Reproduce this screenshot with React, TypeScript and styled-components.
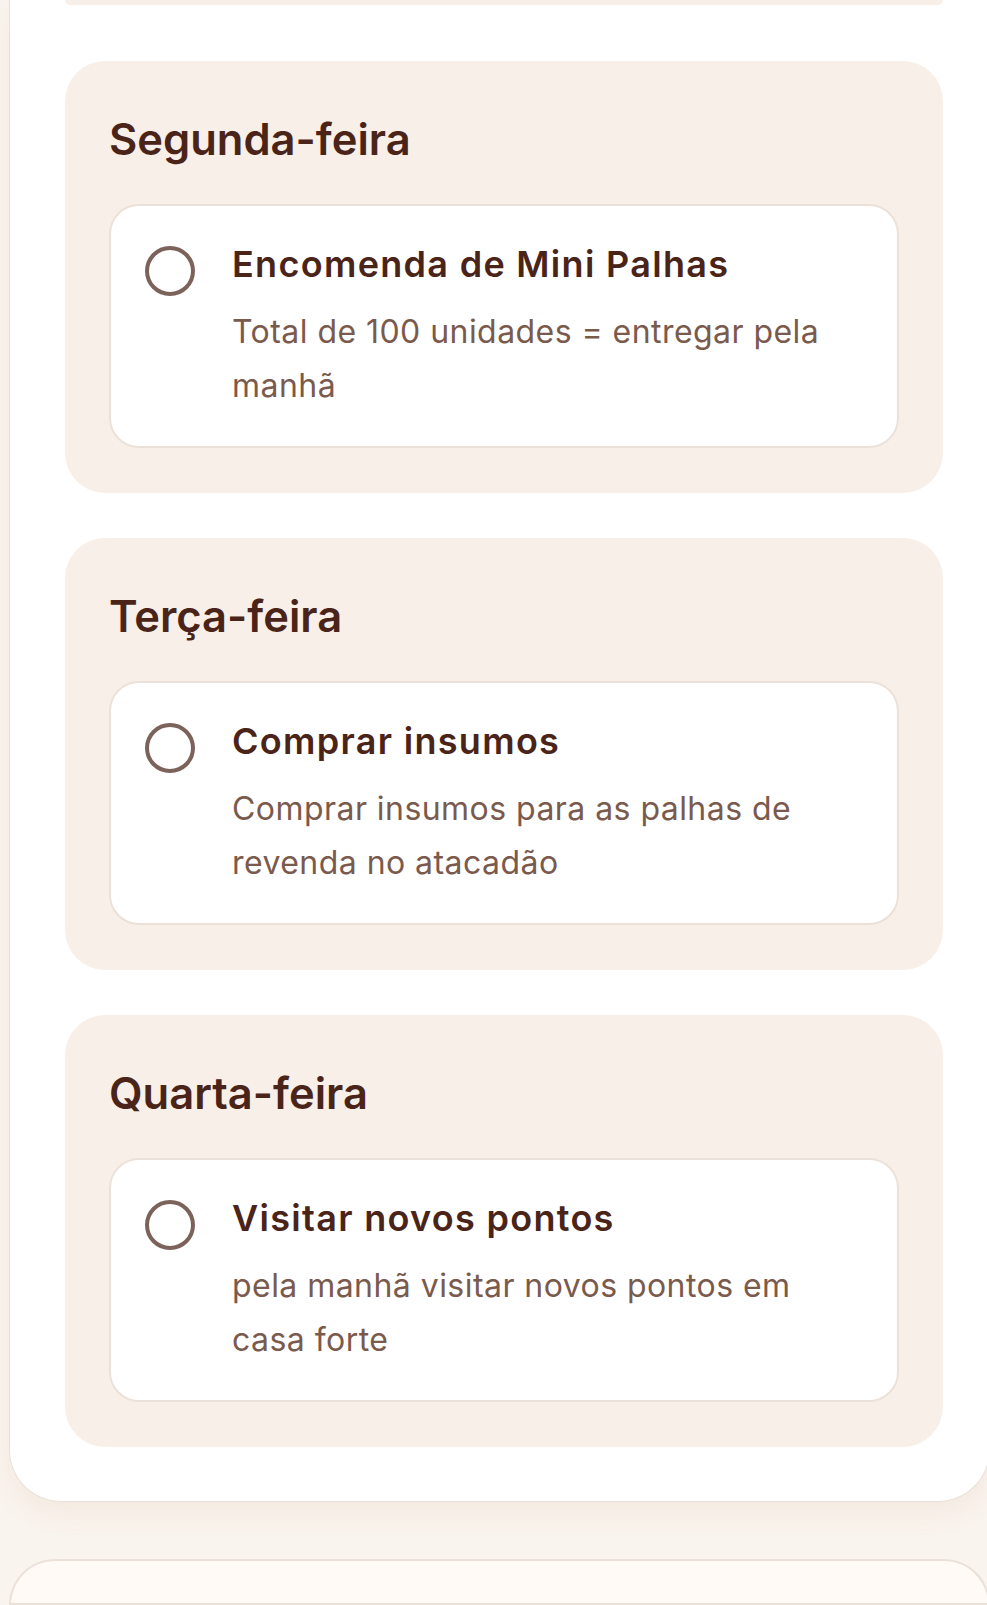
import React from 'react';
import styled, { createGlobalStyle } from 'styled-components';

const GlobalStyle = createGlobalStyle`
  html, body {
    margin: 0;
    padding: 0;
    background: #faf4ee;
    font-family: Inter, "Noto Sans", sans-serif;
    color: #4a2419;
    overflow: hidden;
  }
  * { box-sizing: border-box; }
`;

const Page = styled.div`
  display: flex;
  flex-direction: column;
  gap: 57px;
  height: 1605px;
  overflow: hidden;
`;

const WeekCard = styled.section`
  margin: 0 -3px 0 9px;
  padding: 0 46px 54px 55px;
  background: #ffffff;
  border: 1px solid #eae0d7;
  border-top: none;
  border-radius: 0 0 52px 52px;
  box-shadow: 0 12px 28px rgba(150, 100, 60, 0.07);
  display: flex;
  flex-direction: column;
  gap: 45px;
`;

const PrevBlock = styled.div`
  height: 5px;
  margin-bottom: 11px;
  background: #f8f0e8;
  border-radius: 0 0 8px 8px;
`;

const DayBlock = styled.div`
  background: #f8f0e8;
  border-radius: 40px;
  padding: 45px 44px 45px 44px;
`;

const DayTitle = styled.h2`
  margin: 0 0 32px;
  font-size: 43.5px;
  line-height: 66px;
  font-weight: 600;
  color: #4a2419;
`;

const TaskCard = styled.div`
  display: flex;
  align-items: flex-start;
  gap: 37px;
  background: #ffffff;
  border: 2px solid #ebe1d9;
  border-radius: 30px;
  padding: 37px 36px 33px 34px;
`;

const CheckCircle = styled.span`
  flex: none;
  width: 50px;
  height: 50px;
  margin-top: 3px;
  border-radius: 50%;
  border: 4px solid #7b625a;
`;

const TaskBody = styled.div`
  display: flex;
  flex-direction: column;
  gap: 19px;
`;

const TaskTitle = styled.div`
  font-size: 36px;
  line-height: 43px;
  font-weight: 600;
  letter-spacing: 1.3px;
  color: #4a2419;
`;

const TaskDesc = styled.div`
  font-size: 32px;
  line-height: 54px;
  font-weight: 400;
  letter-spacing: 0.45px;
  color: #7a5a4d;
`;

const NextCard = styled.div`
  margin: 0 -3px 0 9px;
  height: 200px;
  background: #fffaf5;
  border: 2px solid #ebe1d9;
  border-radius: 52px 52px 0 0;
`;

type Task = { title: string; desc: string };
type Day = { name: string; tasks: Task[] };

const days: Day[] = [
  {
    name: 'Segunda-feira',
    tasks: [{ title: 'Encomenda de Mini Palhas', desc: 'Total de 100 unidades = entregar pela manhã' }],
  },
  {
    name: 'Terça-feira',
    tasks: [{ title: 'Comprar insumos', desc: 'Comprar insumos para as palhas de revenda no atacadão' }],
  },
  {
    name: 'Quarta-feira',
    tasks: [{ title: 'Visitar novos pontos', desc: 'pela manhã visitar novos pontos em casa forte' }],
  },
];

export default function App() {
  return (
    <>
      <GlobalStyle />
      <Page>
        <WeekCard>
          <PrevBlock />
          {days.map((day) => (
            <DayBlock key={day.name}>
              <DayTitle>{day.name}</DayTitle>
              {day.tasks.map((task) => (
                <TaskCard key={task.title}>
                  <CheckCircle />
                  <TaskBody>
                    <TaskTitle>{task.title}</TaskTitle>
                    <TaskDesc>{task.desc}</TaskDesc>
                  </TaskBody>
                </TaskCard>
              ))}
            </DayBlock>
          ))}
        </WeekCard>
        <NextCard />
      </Page>
    </>
  );
}
